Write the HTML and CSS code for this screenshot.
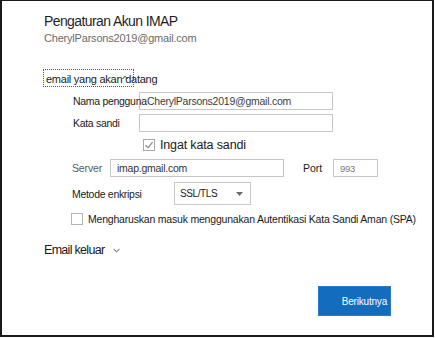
FILE: index.html
```html
<!DOCTYPE html>
<html lang="id">
<head>
  <meta charset="UTF-8">
  <meta name="viewport" content="width=device-width, initial-scale=1.0">
  <title>Pengaturan Akun IMAP</title>
  <link rel="stylesheet" href="styles.css">
</head>
<body>
  <div class="dialog">
    <h1 class="title">Pengaturan Akun IMAP</h1>
    <p class="account">CherylParsons2019@gmail.com</p>

    <!-- bagian email masuk -->
    <div class="section-toggle">
      <span class="toggle-text">email yang akan datang</span>
      <svg class="chev-up" width="6" height="5" viewBox="0 0 6 5">
        <path d="M0.5 4 L3 1.2 L5.5 4" fill="none" stroke="#333" stroke-width="1"/>
      </svg>
    </div>

    <div class="fields">
      <div class="row">
        <label class="lbl lbl-user">Nama pengguna</label>
        <input class="field field-wide" type="text" value="CherylParsons2019@gmail.com" readonly>
      </div>
      <div class="row row-pass">
        <label class="lbl lbl-user">Kata sandi</label>
        <input class="field field-wide" type="password" value="" readonly>
      </div>
      <div class="row row-check">
        <span class="checkbox checked">
          <svg width="10" height="10" viewBox="0 0 10 10">
            <path d="M1.5 5.2 L4 7.6 L8.6 2.2" fill="none" stroke="#8a8a8a" stroke-width="1.3"/>
          </svg>
        </span>
        <span class="check-text">Ingat kata sandi</span>
      </div>
      <div class="row row-server">
        <label class="lbl lbl-server">Server</label>
        <input class="field field-server" type="text" value="imap.gmail.com" readonly>
        <label class="lbl lbl-port">Port</label>
        <input class="field field-port" type="text" value="993" readonly>
      </div>
      <div class="row row-enc">
        <label class="lbl lbl-enc">Metode enkripsi</label>
        <div class="select">
          <span>SSL/TLS</span>
          <svg class="select-arrow" width="7" height="4" viewBox="0 0 7 4">
            <path d="M0 0 L7 0 L3.5 4 Z" fill="#6a6a6a"/>
          </svg>
        </div>
      </div>
      <div class="row row-spa">
        <span class="checkbox"></span>
        <span class="spa-text">Mengharuskan masuk menggunakan Autentikasi Kata Sandi Aman (SPA)</span>
      </div>
    </div>

    <!-- bagian email keluar -->
    <div class="outgoing">
      <span>Email keluar</span>
      <svg class="chev-down" width="7" height="5" viewBox="0 0 7 5">
        <path d="M0.6 1 L3.5 3.8 L6.4 1" fill="none" stroke="#8a8a8a" stroke-width="1.1"/>
      </svg>
    </div>

    <div class="actions">
      <button class="next-btn">Berikutnya</button>
    </div>
  </div>
</body>
</html>
```

FILE: styles.css
```css
* {
  margin: 0;
  padding: 0;
  box-sizing: border-box;
}

body {
  font-family: "Liberation Sans", Arial, sans-serif;
  background-color: #ffffff;
  color: #222222;
}

.dialog {
  width: 434px;
  height: 337px;
  border-style: solid;
  border-color: #1a1a1a;
  border-width: 1px 2px 2px 2px;
  padding: 10px 41px 0 42px;
}

.title {
  font-size: 14px;
  font-weight: normal;
  line-height: 20px;
  letter-spacing: -0.6px;
  color: #1f1f1f;
}

.account {
  font-size: 11px;
  line-height: 15px;
  letter-spacing: -0.2px;
  color: #6b6b6b;
}

.section-toggle {
  position: relative;
  width: 91px;
  height: 18px;
  margin-top: 23px;
  margin-left: -1px;
  padding: 2px 0 0 2px;
  border: 1px dotted #555555;
  font-size: 11px;
  line-height: 14px;
  letter-spacing: -0.25px;
  white-space: nowrap;
  color: #1a1a1a;
}

.chev-up {
  position: absolute;
  left: 78px;
  top: 5px;
}

.fields {
  margin-left: 28px;
  margin-top: 5px;
}

.row {
  display: flex;
  align-items: center;
}

.lbl {
  flex-shrink: 0;
  font-size: 10.5px;
  letter-spacing: -0.3px;
  white-space: nowrap;
  color: #222222;
}

/* label melewati tepi kiri kotak isian, seperti aslinya */
.lbl-user {
  position: relative;
  z-index: 1;
  width: 67px;
  padding-left: 1px;
  overflow: visible;
}

.field {
  flex-shrink: 0;
  height: 18px;
  border: 1px solid #c6c6c6;
  background: #ffffff;
  font-family: inherit;
  font-size: 10.5px;
  letter-spacing: -0.25px;
  color: #3c3c3c;
  outline: none;
}

.field-wide {
  width: 194px;
  padding-left: 7px;
}

.row-pass {
  margin-top: 4px;
}

.row-check {
  height: 18px;
  margin-top: 4px;
  padding-left: 71px;
}

.checkbox {
  display: flex;
  flex-shrink: 0;
  justify-content: center;
  align-items: center;
  width: 12px;
  height: 12px;
  border: 1px solid #b4b4b4;
  background: #ffffff;
}

.checkbox.checked {
  border-color: #a8a8a8;
}

.check-text {
  margin-left: 5px;
  font-size: 12.5px;
  letter-spacing: -0.15px;
  color: #1a1a1a;
}

.row-server {
  margin-top: 5px;
}

.lbl-server {
  width: 38px;
  color: #5a5a5a;
  letter-spacing: -0.15px;
}

.field-server {
  width: 174px;
  padding-left: 6px;
  color: #333333;
}

.lbl-port {
  width: 30px;
  margin-left: 19px;
  letter-spacing: 0;
}

.field-port {
  width: 45px;
  padding-left: 6px;
  font-size: 9.5px;
  color: #7a7a7a;
}

.row-enc {
  margin-top: 5px;
}

.lbl-enc {
  width: 102px;
}

.select {
  display: flex;
  flex-shrink: 0;
  align-items: center;
  justify-content: space-between;
  width: 77px;
  height: 23px;
  padding: 0 7px 0 5px;
  border: 1px solid #c9c9c9;
  background: #ffffff;
  font-size: 10px;
  letter-spacing: -0.4px;
  color: #222222;
}

.row-spa {
  height: 14px;
  margin-top: 7px;
  margin-left: -1px;
}

.spa-text {
  margin-left: 5px;
  font-size: 10.5px;
  letter-spacing: -0.2px;
  white-space: nowrap;
  color: #1a1a1a;
}

.outgoing {
  display: flex;
  align-items: center;
  gap: 9px;
  margin-top: 15px;
  font-size: 12.5px;
  line-height: 18px;
  letter-spacing: -0.7px;
  color: #1a1a1a;
}

.actions {
  display: flex;
  justify-content: flex-end;
  margin-top: 27px;
}

.next-btn {
  width: 73px;
  height: 30px;
  padding: 0 3px 0 0;
  text-align: right;
  border: 1px solid #2a7bcc;
  background-color: #136cbd;
  color: #ffffff;
  font-family: inherit;
  font-size: 10px;
  letter-spacing: -0.2px;
}
```
